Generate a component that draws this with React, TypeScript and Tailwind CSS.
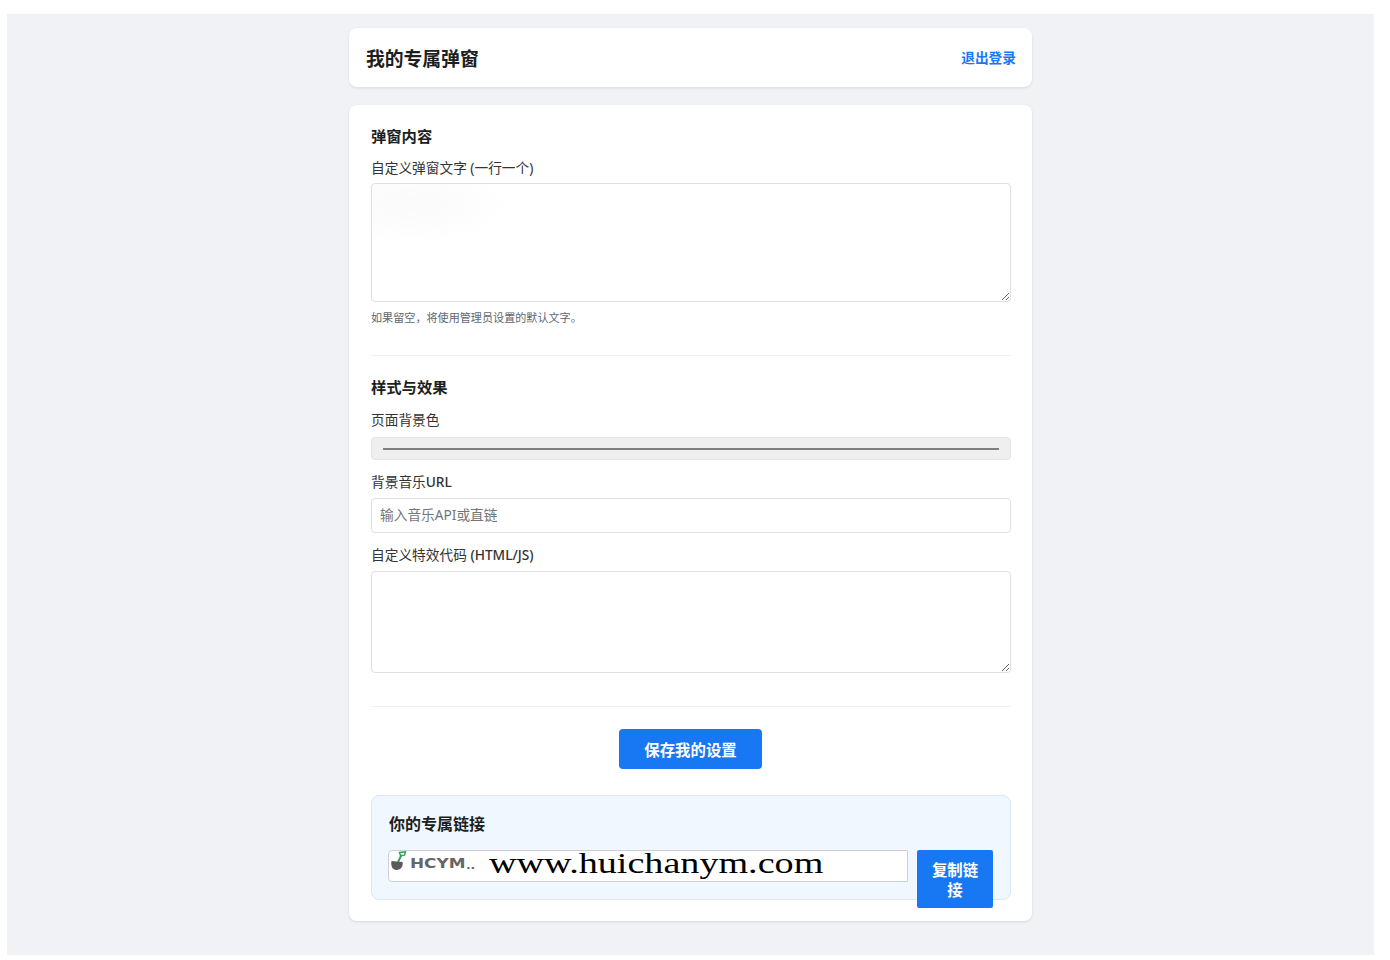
import React from 'react';

const font = { fontFamily: '"Noto Sans", "Noto Sans CJK SC", sans-serif' };

const ShovelLogo = () => (
  <svg width="17" height="20" viewBox="0 0 17 20" className="shrink-0">
    <path d="M8 11 L11.5 4" stroke="#22a35a" strokeWidth="1.8" fill="none" />
    <path d="M9.5 1.5 L15.5 0.8 L14.5 4.2 L10.5 4.5 Z" stroke="#22a35a" strokeWidth="1.4" fill="none" />
    <path d="M1.5 10 L12.5 11 C13.5 15 11 19 6.5 19 C2.5 19 0.5 15 1.5 10 Z" fill="#5a5a5a" />
  </svg>
);

const Label = ({ children }: { children: React.ReactNode }) => (
  <label className="block text-[13.7px] leading-[20px] text-[#333]">{children}</label>
);

export default function App() {
  return (
    <div className="min-h-screen bg-white pt-[14px] pl-[7px] pr-[16px] pb-[5px]" style={font}>
      <div className="h-[941px] bg-[#f0f2f5] pt-[14px] flex flex-col items-center">
        <div className="w-[683px] h-[59px] shrink-0 bg-white rounded-lg shadow-[0_1px_3px_rgba(0,0,0,0.1)] flex items-center justify-between pl-[17px] pr-[16px]">
          <h1 className="mt-[3px] text-[18.8px] font-bold text-[#1c1e21]">我的专属弹窗</h1>
          <a className="mt-[2px] text-[13.7px] font-bold text-[#1877f2]">退出登录</a>
        </div>

        <div className="w-[683px] h-[816px] shrink-0 mt-[18px] bg-white rounded-lg shadow-[0_1px_3px_rgba(0,0,0,0.1)] pl-[22px] pr-[21px] pt-[20px]">
          <h2 className="text-[15.3px] leading-[22px] font-bold text-[#1c1e21]">弹窗内容</h2>
          <div className="mt-[11px]">
            <Label>自定义弹窗文字 (一行一个)</Label>
          </div>
          <textarea className="block mt-[5px] w-full h-[119px] bg-[radial-gradient(ellipse_100px_40px_at_40px_20px,#fafafa,#ffffff)] border border-[#dddfe2] rounded-[4px] outline-none" />
          <p className="mt-[8px] text-[11.1px] leading-[16px] text-[#606770]">如果留空，将使用管理员设置的默认文字。</p>

          <div className="mt-[29px] h-px bg-[#f0f2f5]" />

          <h2 className="mt-[20px] text-[15.3px] leading-[22px] font-bold text-[#1c1e21]">样式与效果</h2>
          <div className="mt-[12px]">
            <Label>页面背景色</Label>
          </div>
          <div className="mt-[7px] h-[23px] bg-[#efefef] border border-[#e4e4e4] rounded-[4px] flex items-center px-[11px]">
            <div className="w-full h-[2px] bg-[#808080]" />
          </div>

          <div className="mt-[12px]">
            <Label>背景音乐<span className="font-medium">URL</span></Label>
          </div>
          <input
            placeholder="输入音乐API或直链"
            className="block mt-[6px] w-full h-[35px] px-[8px] pb-[2px] bg-white border border-[#dddfe2] rounded-[4px] text-[13.7px] outline-none placeholder:text-[#757575]"
          />

          <div className="mt-[12px]">
            <Label>自定义特效代码 <span className="font-medium">(HTML/JS)</span></Label>
          </div>
          <textarea className="block mt-[6px] w-full h-[102px] bg-white border border-[#dddfe2] rounded-[4px] outline-none" />

          <div className="mt-[33px] h-px bg-[#f0f2f5]" />

          <div className="mt-[22px] flex justify-center">
            <button className="w-[143px] h-[40px] mr-px pt-[3px] bg-[#1877f2] rounded-[4px] text-white text-[15.4px] font-bold">保存我的设置</button>
          </div>

          <div className="mt-[26px] h-[105px] bg-[#f0f7ff] border border-[#d8e9fb] rounded-lg pl-[16px] pt-[17px]">
            <h3 className="ml-px text-[16px] leading-[22px] font-bold text-[#1c1e21]">你的专属链接</h3>
            <div className="mt-[15px] flex items-start gap-[9px]">
              <div className="w-[520px] h-[32px] bg-white border border-[#ccd0d5] rounded-l-[4px] flex items-start pl-px">
                <ShovelLogo />
                <span className="ml-[3px] mt-[3px] text-[13.5px] leading-[18px] font-bold origin-left scale-x-[1.25] text-[#666]" style={{ fontFamily: '"DejaVu Sans", sans-serif' }}>HCYM</span>
                <span className="ml-[12px] mt-[3px] text-[13px] leading-[20px] font-bold tracking-[1px] text-[#555]">..</span>
                <span className="ml-[13px] text-[29px] leading-[24px] text-black origin-left scale-x-[1.315] whitespace-nowrap" style={{ fontFamily: '"Liberation Serif", serif' }}>www.huichanym.com</span>
              </div>
              <button className="w-[76px] h-[58px] shrink-0 pt-[3px] bg-[#1877f2] rounded-[2px] text-white text-[15.4px] leading-[20px] font-bold px-[12px]">复制链接</button>
            </div>
          </div>
        </div>
      </div>
    </div>
  );
}
